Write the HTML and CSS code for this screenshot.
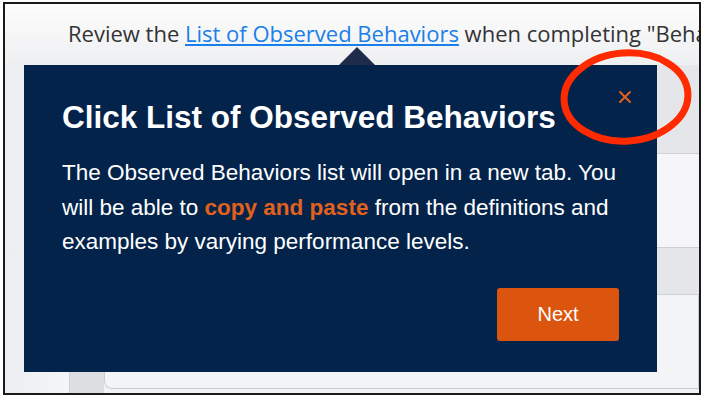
FILE: index.html
```html
<!DOCTYPE html>
<html lang="en">
<head>
  <meta charset="UTF-8" />
  <title>Observed Behaviors tour</title>
  <link rel="stylesheet" href="styles.css">
</head>
<body>

<div class="frame">
  <p class="intro">Review the <a href="#">List of Observed Behaviors</a> when completing "Behaviors"</p>

  <div class="content">
    <div class="side"></div>
    <div class="rail"></div>
    <div class="main">
      <div class="band gray tall"></div>
      <div class="band light mid"></div>
      <div class="band gray short"></div>
      <div class="box"></div>
    </div>
  </div>

  <div class="tour">
    <span class="arrow"></span>
    <button class="close" aria-label="Close">
      <svg width="14" height="14" viewBox="0 0 14 14"><path d="M2 2 L12 12 M12 2 L2 12" stroke="#e2611c" stroke-width="2" stroke-linecap="round"/></svg>
    </button>
    <h2>Click List of Observed Behaviors</h2>
    <p>The Observed Behaviors list will open in a new tab. You will be able to <b>copy and paste</b> from the definitions and examples by varying performance levels.</p>
    <div class="actions">
      <button class="next">Next</button>
    </div>
  </div>

  <svg class="mark" width="140" height="104" viewBox="0 0 140 104">
    <ellipse cx="70" cy="52" rx="62" ry="44" fill="none" stroke="#ff2a00" stroke-width="7" transform="rotate(-4 70 52)"/>
  </svg>
</div>

</body>
</html>
```

FILE: styles.css
```css
body { margin: 0; background: #fff; }

.frame { position: relative; margin: 2px 0 0 3px; width: 698px; height: 393px; box-sizing: border-box; border: 2px solid #1a1a1a; overflow: hidden; background: #f1f2f4; }

.intro { margin: 0; height: 61px; box-sizing: border-box; padding: 14px 0 0 63px; white-space: nowrap; font-family: "Open Sans", sans-serif; font-size: 22px; color: #333; background: linear-gradient(#fdfdfd, #eeeff1); }
.intro a { color: #1a7fe8; text-decoration: underline; }

.content { display: flex; height: 330px; }
.side { width: 64px; background: linear-gradient(90deg, #eceef1, #f4f5f7); }
.rail { width: 34px; background: #dcdee1; border-left: 1px solid #cfd2d6; }
.main { flex: 1; display: flex; flex-direction: column; }
.band { border-bottom: 1px solid #cdd1d6; }
.band.gray { background: #e5e6e9; }
.band.light { background: #f6f6f8; }
.tall { height: 88px; }
.mid { height: 93px; }
.short { height: 46px; }
.box { flex: 1; margin-bottom: 6px; background: #f3f4f6; border: 1px solid #c9cdd3; border-top: 0; border-radius: 0 0 0 8px; }

.tour { position: absolute; left: 19px; top: 61px; width: 633px; height: 307px; box-sizing: border-box; padding: 32px 38px 31px 38px; background: #03234b; color: #fff; font-family: "Liberation Sans", Arial, sans-serif; display: flex; flex-direction: column; }
.tour h2 { margin: 0; font-size: 31.5px; font-weight: bold; line-height: 40px; }
.tour p { margin: 19px 0 0; font-size: 22.5px; line-height: 34.5px; }
.tour p b { color: #e2611c; }
.actions { margin-top: auto; display: flex; justify-content: flex-end; }
.next { width: 122px; height: 53px; border: 0; border-radius: 3px; background: #dc550f; color: #fff; font-family: "Liberation Sans", Arial, sans-serif; font-size: 20px; }

.arrow { position: absolute; left: 315px; top: -18px; width: 0; height: 0; border-left: 18px solid transparent; border-right: 18px solid transparent; border-bottom: 18px solid #1f2b4b; }

.close { position: absolute; right: 25px; top: 25px; padding: 0; border: 0; background: none; width: 14px; height: 14px; }
.close svg { display: block; }

.mark { position: absolute; left: 551px; top: 41px; }
```
